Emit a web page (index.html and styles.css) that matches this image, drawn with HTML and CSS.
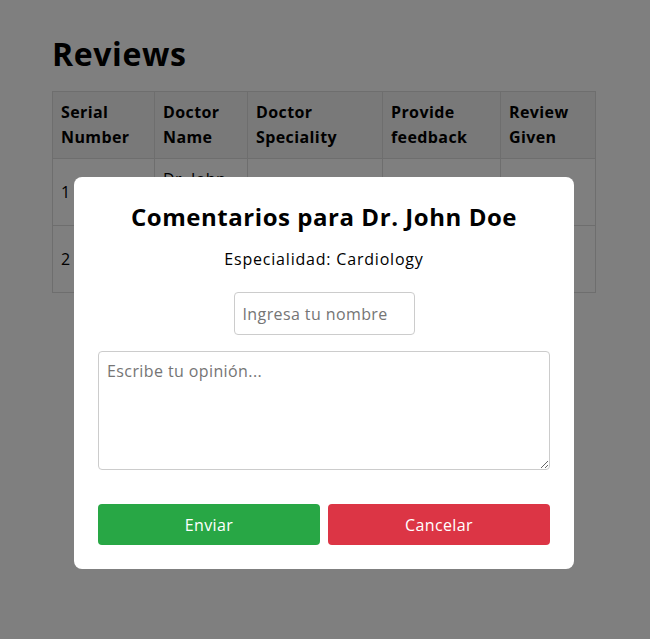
FILE: index.html
```html
<!DOCTYPE html>
<html lang="en">
<head>
<meta charset="utf-8">
<title>Reviews</title>
<link rel="stylesheet" href="styles.css">
</head>
<body>
<main class="page">
  <h1 class="page-title">Reviews</h1>
  <table class="reviews">
    <colgroup>
      <col class="c1"><col class="c2"><col class="c3"><col class="c4"><col class="c5">
    </colgroup>
    <thead>
      <tr>
        <th>Serial Number</th>
        <th>Doctor Name</th>
        <th>Doctor Speciality</th>
        <th>Provide feedback</th>
        <th>Review Given</th>
      </tr>
    </thead>
    <tbody>
      <tr>
        <td>1</td>
        <td>Dr. John Doe</td>
        <td>Cardiology</td>
        <td></td>
        <td></td>
      </tr>
      <tr>
        <td>2</td>
        <td>Dr. Jane Smith</td>
        <td>Dermatology</td>
        <td></td>
        <td></td>
      </tr>
    </tbody>
  </table>
</main>

<div class="overlay">
  <div class="modal">
    <h2 class="modal-title">Comentarios para Dr. John Doe</h2>
    <p class="modal-sub">Especialidad: Cardiology</p>
    <form class="modal-form">
      <input class="name-input" type="text" placeholder="Ingresa tu nombre">
      <textarea class="opinion" placeholder="Escribe tu opinión..."></textarea>
      <div class="actions">
        <button type="button" class="btn btn-send">Enviar</button>
        <button type="button" class="btn btn-cancel">Cancelar</button>
      </div>
    </form>
  </div>
</div>
</body>
</html>
```
FILE: styles.css
```css
* { box-sizing: border-box; }

html, body {
  margin: 0;
  padding: 0;
  background: #ffffff;
  font-family: "Open Sans", "Liberation Sans", sans-serif;
  letter-spacing: 0.4px;
  color: #000;
}

.page {
  padding: 36px 54px 0 52px;
}

.page-title {
  margin: 0 0 19px;
  font-size: 32px;
  line-height: 36px;
  font-weight: 700;
  letter-spacing: 0.6px;
}

.reviews {
  border-collapse: collapse;
  table-layout: fixed;
  width: 543px;
  font-size: 16px;
  line-height: 25px;
}

.c1 { width: 102px; }
.c2 { width: 93px; }
.c3 { width: 135px; }
.c4 { width: 118px; }
.c5 { width: 95px; }

.reviews th,
.reviews td {
  border: 1px solid #dddddd;
  padding: 8px;
  text-align: left;
  vertical-align: middle;
  height: 67px;
}

.reviews th {
  background: #f2f2f2;
  font-weight: 700;
}

.overlay {
  position: fixed;
  inset: 0;
  background: rgba(0, 0, 0, 0.5);
  display: flex;
  justify-content: center;
  align-items: flex-start;
  padding-right: 2px;
}

.modal {
  margin-top: 177px;
  width: 500px;
  background: #fff;
  border-radius: 8px;
  padding: 24px;
  text-align: center;
}

.modal-title {
  margin: 0;
  font-size: 24px;
  line-height: 32px;
  font-weight: 700;
  letter-spacing: 0.55px;
}

.modal-sub {
  margin: 14px 0 0;
  font-size: 16px;
  line-height: 24px;
  letter-spacing: 0.8px;
}

.modal-form {
  margin-top: 21px;
  display: flex;
  flex-direction: column;
  align-items: center;
}

.name-input {
  width: 181px;
  height: 43px;
  padding: 8px;
  border: 1px solid #cccccc;
  border-radius: 4px;
  font: inherit;
  font-size: 16px;
  letter-spacing: 0.4px;
}

.opinion {
  margin-top: 16px;
  width: 452px;
  height: 119px;
  padding: 8px;
  border: 1px solid #cccccc;
  border-radius: 4px;
  font: inherit;
  font-size: 16px;
  letter-spacing: 0.4px;
  resize: vertical;
  display: block;
}

.name-input::placeholder,
.opinion::placeholder {
  color: #757575;
}

.actions {
  margin-top: 34px;
  width: 452px;
  display: flex;
  gap: 8px;
}

.btn {
  flex: 1;
  height: 41px;
  border: 0;
  border-radius: 4px;
  color: #fff;
  font: inherit;
  font-size: 16px;
  letter-spacing: 0.4px;
}

.btn-send { background: #28a745; }
.btn-cancel { background: #dc3545; }
```
